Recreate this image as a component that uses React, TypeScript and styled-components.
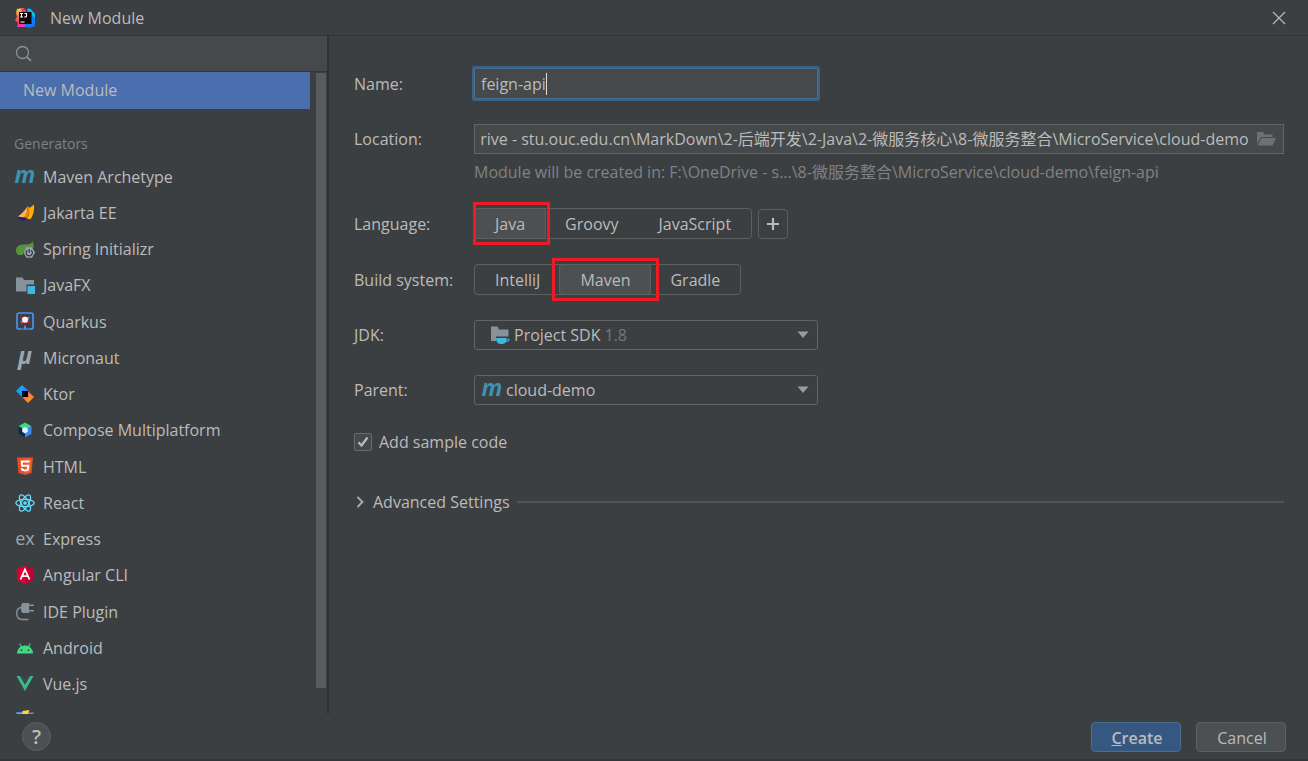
import React, { useEffect, useRef } from 'react';
import styled, { createGlobalStyle, css } from 'styled-components';

const Global = createGlobalStyle`
  * { box-sizing: border-box; }
  body { margin: 0; background: #3c3f41; }
  button, input, select { font: inherit; color: inherit; margin: 0; }
`;

const Dialog = styled.div`
  display: flex;
  flex-direction: column;
  height: 100vh;
  background: #3c3f41;
  border-bottom: 2px solid #323436;
  color: #bbbbbb;
  font: 16px/24px 'Open Sans', 'Noto Sans CJK SC', sans-serif;
`;

const TitleBar = styled.header`
  display: flex;
  align-items: center;
  gap: 15px;
  height: 36px;
  padding: 0 20px 0 15px;
  border-bottom: 1px solid #323436;
`;

const Title = styled.h1`
  flex: 1;
  margin: 0;
  font-size: 16px;
  font-weight: 400;
`;

const CloseButton = styled.button`
  display: flex;
  padding: 2px;
  border: 0;
  background: none;
`;

const Body = styled.div`
  display: flex;
  flex: 1;
  min-height: 0;
`;

const Sidebar = styled.aside`
  display: flex;
  flex-direction: column;
  width: 329px;
  border-right: 2px solid #323232;
`;

const SearchBar = styled.label`
  display: flex;
  align-items: center;
  gap: 8px;
  height: 36px;
  padding: 0 15px;
  background: #45494a;
  border-bottom: 1px solid #323436;
`;

const SearchInput = styled.input`
  flex: 1;
  min-width: 0;
  padding: 0;
  border: 0;
  outline: 0;
  background: none;
`;

const ListArea = styled.div`
  display: flex;
  flex: 1;
  min-height: 0;
  overflow: hidden;
`;

const ListColumn = styled.nav`
  flex: 1;
  min-width: 0;
`;

const ScrollTrack = styled.div`
  width: 17px;
  padding: 1px 1px 26px 6px;
`;

const ScrollThumb = styled.div`
  height: 100%;
  background: #595b5d;
`;

const SelectedItem = styled.button`
  display: block;
  width: 100%;
  height: 37px;
  padding: 0 23px 2px;
  border: 0;
  background: #4b6eaf;
  text-align: left;
`;

const GroupTitle = styled.h2`
  margin: 23px 0 3px;
  padding-left: 14px;
  color: #7f8182;
  font-size: 14px;
  line-height: 24px;
  font-weight: 400;
`;

const GeneratorList = styled.ul`
  margin: 0;
  padding: 0;
  list-style: none;
`;

const GeneratorItem = styled.li`
  &:nth-child(4n) { margin-bottom: 1px; }
`;

const GeneratorButton = styled.button`
  display: flex;
  align-items: center;
  gap: 8px;
  width: 100%;
  height: 36px;
  padding: 0 15px;
  border: 0;
  background: none;
  text-align: left;
`;

const IconBox = styled.span`
  display: flex;
  flex: none;
  align-items: center;
  justify-content: center;
  width: 20px;
  height: 20px;
`;

const Mark = styled.span<{ $color: string; $size: number; $bold?: boolean }>`
  padding-bottom: ${p => (p.$bold ? 6 : 3)}px;
  color: ${p => p.$color};
  font-size: ${p => p.$size}px;
  line-height: 20px;
  font-weight: ${p => (p.$bold ? 700 : 400)};
  font-style: ${p => (p.$bold ? 'italic' : 'normal')};
`;

const Form = styled.form`
  display: flex;
  flex: 1;
  flex-direction: column;
  gap: 25px;
  min-width: 0;
  padding: 32px 24px 0 25px;
`;

const Field = styled.div`
  display: flex;
  align-items: center;
`;

const labelColumn = css`
  flex: none;
  width: 120px;
`;

const FieldLabel = styled.label`${labelColumn}`;
const FieldCaption = styled.span`${labelColumn}`;

const LocationGroup = styled.div`
  display: flex;
  flex-direction: column;
  gap: 6px;
`;

const Hint = styled.p`
  margin: 0 0 -1px 120px;
  color: #808284;
  white-space: nowrap;
`;

const NameFrame = styled.div`
  display: flex;
  align-items: center;
  width: 344px;
  height: 31px;
  padding: 0 6px;
  background: #45494a;
  border: 1px solid #466d94;
  border-radius: 1px;
  box-shadow: 0 0 0 2px #3d6185;
`;

const NameInput = styled.input`
  field-sizing: content;
  min-width: 0;
  max-width: 100%;
  padding: 0;
  border: 0;
  outline: 0;
  background: none;
  caret-color: transparent;
`;

const Caret = styled.span`
  width: 1px;
  height: 22px;
  background: #dddddd;
`;

const PathFrame = styled.div`
  display: flex;
  flex: 1;
  align-items: center;
  gap: 7px;
  min-width: 0;
  height: 30px;
  padding: 0 7px 0 6px;
  background: #45494a;
  border: 1px solid #646464;
`;

const PathInput = styled.input`
  flex: 1;
  min-width: 0;
  padding: 0;
  border: 0;
  outline: 0;
  background: none;
`;

const BrowseButton = styled.button`
  display: flex;
  padding: 0;
  border: 0;
  background: none;
`;

const Segments = styled.div`
  display: flex;
  height: 31px;
  border: 1px solid #5e6060;
  border-radius: 4px;
`;

const Segment = styled.label`
  position: relative;
  display: flex;
  align-items: center;
  padding: 0 20px;
  border-radius: 3px;
  &:has(input:checked) {
    background: #4c5052;
    box-shadow: 0 0 0 1px #5e6060;
  }
`;

const SegmentRadio = styled.input`
  position: absolute;
  inset: 0;
  opacity: 0;
`;

const Highlight = styled.span<{ $left: number; $right: number }>`
  position: absolute;
  inset: -7px ${p => -p.$right}px -7px ${p => -p.$left}px;
  z-index: 1;
  border: 3px solid #ed1c24;
  pointer-events: none;
`;

const AddButton = styled.button`
  display: flex;
  align-items: center;
  justify-content: center;
  width: 30px;
  height: 30px;
  margin-left: 6px;
  padding: 0;
  border: 1px solid #5e6060;
  border-radius: 4px;
  background: none;
`;

const DropDown = styled.div<{ $indent?: boolean }>`
  display: flex;
  align-items: center;
  width: 344px;
  height: 30px;
  padding: 0 8px 0 ${p => (p.$indent ? 15 : 7)}px;
  border: 1px solid #646464;
  border-radius: 3px;
`;

const DropDownSelect = styled.select`
  field-sizing: content;
  appearance: none;
  margin-left: 4px;
  padding: 0;
  border: 0;
  outline: 0;
  background: none;
`;

const Version = styled.span`
  margin-left: 4px;
  color: #787878;
`;

const Arrow = styled.svg`
  margin-left: auto;
`;

const CheckRow = styled.label`
  display: flex;
  align-items: center;
  gap: 7px;
`;

const CheckBox = styled.input`
  appearance: none;
  width: 18px;
  height: 18px;
  border: 1px solid #6b6b6b;
  border-radius: 2px;
  background: #43494a;
  &:checked {
    background: #43494a
      url("data:image/svg+xml,%3Csvg xmlns='http://www.w3.org/2000/svg' viewBox='0 0 16 16'%3E%3Cpath d='M3.5 8.2l3 3.3L12.5 3.5' fill='none' stroke='%23bbbbbb' stroke-width='2.2'/%3E%3C/svg%3E");
  }
`;

const Advanced = styled.div`
  display: flex;
  align-items: center;
  gap: 7px;
  margin-top: 11px;
`;

const AdvancedToggle = styled.button`
  display: flex;
  align-items: center;
  gap: 7px;
  padding: 0;
  border: 0;
  background: none;
`;

const Rule = styled.hr`
  flex: 1;
  margin: 0;
  border: 0;
  border-top: 2px solid #515355;
`;

const Footer = styled.footer`
  display: flex;
  align-items: center;
  gap: 15px;
  height: 45px;
  padding: 0 22px;
`;

const HelpButton = styled.button`
  width: 29px;
  height: 29px;
  margin-right: auto;
  padding: 0;
  border: 1px solid #5e6060;
  border-radius: 50%;
  background: #4c5052;
  font-size: 20px;
  line-height: 24px;
  font-weight: 600;
`;

const ActionButton = styled.button<{ $primary?: boolean }>`
  width: 90px;
  height: 30px;
  padding: 2px 0 0 2px;
  border: 1px solid ${p => (p.$primary ? '#4c708c' : '#5e6060')};
  border-radius: 4px;
  background: ${p => (p.$primary ? '#365880' : '#4c5052')};
  font-weight: ${p => (p.$primary ? 600 : 400)};
`;

const IdeaLogo = () => (
  <svg width="20" height="20" viewBox="0 0 20 20" aria-hidden="true">
    <defs>
      <linearGradient id="ideaWarm" x1="0" y1="0" x2="0" y2="1">
        <stop offset="0" stopColor="#fcd04a" />
        <stop offset=".45" stopColor="#f97a3c" />
        <stop offset=".8" stopColor="#fe2c78" />
        <stop offset="1" stopColor="#e040c8" />
      </linearGradient>
    </defs>
    <path d="M2 1l6-1 4 5-1 14H2l1-4-3-3 2-3-1-4z" fill="url(#ideaWarm)" />
    <path d="M12 1l3-.500L20 6v12l-6 2-5-2 3-3z" fill="#087cfa" />
    <path d="M12 1l3-.500L20 6v4l-5-5z" fill="#07c3f2" />
    <path d="M6 0l4 1 2 4H7z" fill="#fe315d" />
    <path d="M4 4h12.500v12H4z" fill="#100508" />
    <path d="M5 5.500h3M6.500 5v4M5 9h3M9.500 5.500H12M11.500 5v3c0 .9-.8 1.200-2.200.8M5.500 14h4" fill="none" stroke="#fff" strokeWidth="1.100" />
  </svg>
);

const MavenMark = () => <Mark $color="#3e91b0" $size={23} $bold>m</Mark>;

const Jakarta = () => (
  <svg width="20" height="20" viewBox="0 0 20 20" aria-hidden="true">
    <path d="M3 13.500C8 10 11 6 12.500 3c.4 4-1 8-3 11.500z" fill="#fdb35c" />
    <path d="M8 14.500C12 11 13 7 13 3.500l3 2-4 9.500z" fill="#f98200" />
    <path d="M12 15.500C15 11 14.500 7 14 5.500L19 1.500c.5 5-.5 10-3 14-1.500 1-3 .5-4 0z" fill="#ffb000" />
    <path d="M2.500 14c3 .5 6 .3 9 1-1 1.500-2 2.700-4 2.800-2 0-3-1.800-5-3.800z" fill="#1b2379" />
  </svg>
);

const Spring = () => (
  <svg width="20" height="20" viewBox="0 0 20 20" aria-hidden="true">
    <path d="M17.500 2C17 5 13 5.500 8 5.500 4 5.600 1 8 1 11.500c0 2 1 3.500 2.500 4.500H8c0-5 4-8 10.500-7 .4-2.500 0-5-1-7z" fill="#57923c" />
    <path d="M11.400 8.300h5.600l3 5.200-3 5.300h-5.600L8.500 13.500z" fill="#9aa7b0" />
    <path d="M12.300 11.300a3.100 3.100 0 1 0 3.900 0M14.200 10v3.800" fill="none" stroke="#30363a" strokeWidth="1.300" />
  </svg>
);

const JavaFx = () => (
  <svg width="20" height="20" viewBox="0 0 20 20" aria-hidden="true">
    <path d="M1 2.500h6.500L9 5h10v4.500h-7.500v7H1z" fill="#87939a" />
    <path d="M12.500 11H20v8h-7.500z" fill="#40b6e0" />
  </svg>
);

const Quarkus = () => (
  <svg width="20" height="20" viewBox="0 0 20 20" aria-hidden="true">
    <path d="M7.500 17H4a2 2 0 0 1-2-2V3a2 2 0 0 1 2-2h12a2 2 0 0 1 2 2v12a2 2 0 0 1-2 2h-3.500" fill="none" stroke="#4695eb" strokeWidth="1.700" />
    <path d="M10 12.500l2.300 5.300H8z" fill="#4695eb" />
    <path d="M5 4.500l4 1L6.500 8zM15 8.500L13.500 12 10 10z" fill="#ff004a" />
    <path d="M15 4.500l-4 1L13.500 8zM5 8.500L6.500 12l3.500-2z" fill="#4695eb" />
    <path d="M5.500 5l3 .5L6.500 7zM10 3.500L12 6H8zM6 11.500L7.500 8l2.500 2z" fill="#ff004a" />
    <circle cx="10" cy="7.800" r="3" fill="#fff" />
  </svg>
);

const Ktor = () => (
  <svg width="20" height="20" viewBox="0 0 20 20" aria-hidden="true">
    <defs>
      <linearGradient id="ktorCool" x1="0" y1="0" x2="1" y2=".6">
        <stop offset=".5" stopColor="#08a6ff" />
        <stop offset="1" stopColor="#6b57ff" />
      </linearGradient>
      <linearGradient id="ktorWarm" x1="0" y1="0" x2="1" y2="1">
        <stop offset=".1" stopColor="#b54ff0" />
        <stop offset=".6" stopColor="#ff8a20" />
      </linearGradient>
    </defs>
    <path d="M7 1l6.500 6H7v6L1 7z" fill="url(#ktorCool)" />
    <path d="M13 7l6 6-6 6-6-6h6z" fill="url(#ktorWarm)" />
    <path d="M7 7h6v6H7z" fill="#000" />
  </svg>
);

const Compose = () => (
  <svg width="20" height="20" viewBox="0 0 20 20" aria-hidden="true">
    <path d="M10 2.500l6.500 3.700L10 10 3.500 6.200z" fill="#3ddc84" />
    <path d="M3.500 6.200L10 10v7.500l-6.500-3.700z" fill="#083042" />
    <path d="M16.500 6.200v7.600L10 17.500V10z" fill="#4285f4" />
    <path d="M10 7l2.800 1.600v3.200L10 13.400l-2.800-1.600V8.600z" fill="#e4f4fb" />
  </svg>
);

const Html5 = () => (
  <svg width="20" height="20" viewBox="0 0 20 20" aria-hidden="true">
    <path d="M2 .5h16L16.500 16 10 18l-6.500-2z" fill="#e44d26" />
    <path d="M10 1.800h6.600L15.300 15 10 16.500z" fill="#f16529" />
    <path d="M14.500 4.500H6.700l.3 4.200h6.300l-.4 4-2.900.9-2.800-.9-.1-1.700" fill="none" stroke="#fff" strokeWidth="1.900" />
  </svg>
);

const ReactLogo = () => (
  <svg width="20" height="20" viewBox="0 0 20 20" fill="none" stroke="#61dafb" strokeWidth="1.300" aria-hidden="true">
    <ellipse cx="10" cy="10" rx="9.200" ry="3.600" />
    <ellipse cx="10" cy="10" rx="9.200" ry="3.600" transform="rotate(60 10 10)" />
    <ellipse cx="10" cy="10" rx="9.200" ry="3.600" transform="rotate(120 10 10)" />
    <circle cx="10" cy="10" r="1.200" fill="#61dafb" />
  </svg>
);

const Angular = () => (
  <svg width="20" height="20" viewBox="0 0 20 20" aria-hidden="true">
    <path d="M10 1l8.700 3-1.300 11.300L10 19l-7.400-3.700L1.300 4z" fill="#dd0031" />
    <path d="M10 1l8.700 3-1.300 11.300L10 19z" fill="#c3002f" />
    <path d="M5.500 14.500L10 4.500l4.500 10M7 11.200h6" fill="none" stroke="#fff" strokeWidth="1.800" />
  </svg>
);

const Plug = () => (
  <svg width="20" height="20" viewBox="0 0 20 20" aria-hidden="true">
    <path d="M7.500 1H14v10H7.500C6.500 10 6 8.500 6 6s.5-4 1.500-5z" fill="#87939a" />
    <path d="M14 3.300h5M14 8.700h5" stroke="#87939a" strokeWidth="1.400" />
    <path d="M6 5.500C3 6 1.700 8 1.700 11.500c0 4 2.300 6 6 6h5.800" fill="none" stroke="#87939a" strokeWidth="1.400" />
  </svg>
);

const Android = () => (
  <svg width="20" height="20" viewBox="0 0 20 20" aria-hidden="true">
    <path d="M2 15.500C2.300 11 5.500 7.500 10 7.500s7.700 3.500 8 8z" fill="#3ddc84" />
    <path d="M6.500 9L4.700 5.500M13.500 9l1.800-3.500" stroke="#3ddc84" strokeWidth="1.100" />
    <circle cx="6.500" cy="12.200" r=".9" fill="#3c3f41" />
    <circle cx="13.500" cy="12.200" r=".9" fill="#3c3f41" />
  </svg>
);

const Vue = () => (
  <svg width="20" height="20" viewBox="0 0 20 20" aria-hidden="true">
    <path d="M1.500 2H5l5 8.500L15 2h3.500L10 17z" fill="#41b883" />
    <path d="M5 2h3.200L10 5.200 11.800 2H15l-5 8.500z" fill="#35495e" />
  </svg>
);

const Vite = () => (
  <svg width="20" height="20" viewBox="0 0 20 20" aria-hidden="true">
    <path d="M1 2.500h18L10 18z" fill="#7b7cf5" />
    <path d="M1 2.500h7L9 11z" fill="#41b8fa" />
    <path d="M7.500 1l7-1-1.500 4h2.500L10 12l.7-5H7z" fill="#ffd62e" />
  </svg>
);

const SdkFolder = () => (
  <svg width="20" height="20" viewBox="0 0 20 20" aria-hidden="true">
    <path d="M1 1.500h6.500L9 4.500h9.500v7H6v4.500H1z" fill="#87939a" />
    <path d="M6 13h10.500v.7h3c.3 2-1 3.200-3.500 3.200-1 1.300-2 2-4 2h-1.500C8 18.900 6 17 6 13z" fill="#40b6e0" />
    <path d="M16.700 14.600h1.700c0 .8-.8 1.300-1.900 1.300z" fill="#3c3f41" />
  </svg>
);

const DownArrow = () => (
  <Arrow width="12" height="8" viewBox="0 0 12 8" aria-hidden="true">
    <path d="M.5 .5h11L6 7z" fill="#9a9da0" />
  </Arrow>
);

const generators: { name: string; icon: React.ReactNode }[] = [
  { name: 'Maven Archetype', icon: <MavenMark /> },
  { name: 'Jakarta EE', icon: <Jakarta /> },
  { name: 'Spring Initializr', icon: <Spring /> },
  { name: 'JavaFX', icon: <JavaFx /> },
  { name: 'Quarkus', icon: <Quarkus /> },
  { name: 'Micronaut', icon: <Mark $color="#9aa7b0" $size={23} $bold>μ</Mark> },
  { name: 'Ktor', icon: <Ktor /> },
  { name: 'Compose Multiplatform', icon: <Compose /> },
  { name: 'HTML', icon: <Html5 /> },
  { name: 'React', icon: <ReactLogo /> },
  { name: 'Express', icon: <Mark $color="#9aa7b0" $size={18}>ex</Mark> },
  { name: 'Angular CLI', icon: <Angular /> },
  { name: 'IDE Plugin', icon: <Plug /> },
  { name: 'Android', icon: <Android /> },
  { name: 'Vue.js', icon: <Vue /> },
  { name: '', icon: <Vite /> },
];

interface ChoiceProps {
  name: string;
  options: string[];
  selected: string;
  left: number;
  right: number;
}

const Choice = ({ name, options, selected, left, right }: ChoiceProps) => (
  <Segments role="radiogroup" aria-label={name}>
    {options.map(option => (
      <Segment key={option}>
        <SegmentRadio type="radio" name={name} defaultChecked={option === selected} />
        {option}
        {option === selected && <Highlight $left={left} $right={right} />}
      </Segment>
    ))}
  </Segments>
);

export default function App() {
  const pathRef = useRef<HTMLInputElement>(null);

  // Keep the end of a long path in view.
  useEffect(() => {
    const input = pathRef.current;
    if (input) input.scrollLeft = input.scrollWidth;
  }, []);

  return (
    <Dialog>
      <Global />
      <TitleBar>
        <IdeaLogo />
        <Title>New Module</Title>
        <CloseButton type="button" aria-label="Close">
          <svg width="14" height="14" viewBox="0 0 14 14" aria-hidden="true">
            <path d="M1 1l12 12M13 1L1 13" stroke="#b4b6b8" strokeWidth="1.300" />
          </svg>
        </CloseButton>
      </TitleBar>
      <Body>
        <Sidebar>
          <SearchBar>
            <svg width="18" height="18" viewBox="0 0 18 18" fill="none" stroke="#87939a" aria-hidden="true">
              <circle cx="7.500" cy="7.500" r="6" strokeWidth="1.300" />
              <path d="M11.800 11.800l4.200 4" strokeWidth="1.800" />
            </svg>
            <SearchInput type="text" aria-label="Search" />
          </SearchBar>
          <ListArea>
            <ListColumn>
              <SelectedItem type="button">New Module</SelectedItem>
              <GroupTitle>Generators</GroupTitle>
              <GeneratorList>
                {generators.map(({ name, icon }) => (
                  <GeneratorItem key={name}>
                    <GeneratorButton type="button">
                      <IconBox>{icon}</IconBox>
                      {name}
                    </GeneratorButton>
                  </GeneratorItem>
                ))}
              </GeneratorList>
            </ListColumn>
            <ScrollTrack><ScrollThumb /></ScrollTrack>
          </ListArea>
        </Sidebar>
        <Form>
          <Field>
            <FieldLabel htmlFor="name">Name:</FieldLabel>
            <NameFrame>
              <NameInput id="name" type="text" defaultValue="feign-api" />
              <Caret />
            </NameFrame>
          </Field>
          <LocationGroup>
            <Field>
              <FieldLabel htmlFor="location">Location:</FieldLabel>
              <PathFrame>
                <PathInput
                  id="location"
                  ref={pathRef}
                  type="text"
                  defaultValue="F:\OneDrive - stu.ouc.edu.cn\MarkDown\2-后端开发\2-Java\2-微服务核心\8-微服务整合\MicroService\cloud-demo"
                />
                <BrowseButton type="button" aria-label="Browse">
                  <svg width="20" height="16" viewBox="0 0 20 16" aria-hidden="true">
                    <path d="M1 1h6l2 2.500h7.500V6H5L1 13z" fill="#6a7073" />
                    <path d="M5.500 7H20l-3.500 7.500H1.500z" fill="#6a7073" />
                  </svg>
                </BrowseButton>
              </PathFrame>
            </Field>
            <Hint>Module will be created in: F:\OneDrive - s...\8-微服务整合\MicroService\cloud-demo\feign-api</Hint>
          </LocationGroup>
          <Field>
            <FieldCaption>Language:</FieldCaption>
            <Choice name="Language" options={['Java', 'Groovy', 'JavaScript']} selected="Java" left={2} right={5} />
            <AddButton type="button" aria-label="Add language">
              <svg width="14" height="14" viewBox="0 0 14 14" aria-hidden="true">
                <path d="M7 1v12M1 7h12" stroke="#bbbbbb" strokeWidth="2.200" />
              </svg>
            </AddButton>
          </Field>
          <Field>
            <FieldCaption>Build system:</FieldCaption>
            <Choice name="Build system" options={['IntelliJ', 'Maven', 'Gradle']} selected="Maven" left={8} right={9} />
          </Field>
          <Field>
            <FieldLabel htmlFor="jdk">JDK:</FieldLabel>
            <DropDown $indent>
              <SdkFolder />
              <DropDownSelect id="jdk"><option>Project SDK</option></DropDownSelect>
              <Version>1.8</Version>
              <DownArrow />
            </DropDown>
          </Field>
          <Field>
            <FieldLabel htmlFor="parent">Parent:</FieldLabel>
            <DropDown>
              <IconBox><MavenMark /></IconBox>
              <DropDownSelect id="parent"><option>cloud-demo</option></DropDownSelect>
              <DownArrow />
            </DropDown>
          </Field>
          <CheckRow>
            <CheckBox type="checkbox" defaultChecked />
            Add sample code
          </CheckRow>
          <Advanced>
            <AdvancedToggle type="button" aria-expanded="false">
              <svg width="12" height="14" viewBox="0 0 12 14" aria-hidden="true">
                <path d="M3.500 2l5 5-5 5" fill="none" stroke="#adadad" strokeWidth="1.800" />
              </svg>
              Advanced Settings
            </AdvancedToggle>
            <Rule />
          </Advanced>
        </Form>
      </Body>
      <Footer>
        <HelpButton type="button" aria-label="Help">?</HelpButton>
        <ActionButton type="submit" $primary><u>C</u>reate</ActionButton>
        <ActionButton type="button">Cancel</ActionButton>
      </Footer>
    </Dialog>
  );
}
